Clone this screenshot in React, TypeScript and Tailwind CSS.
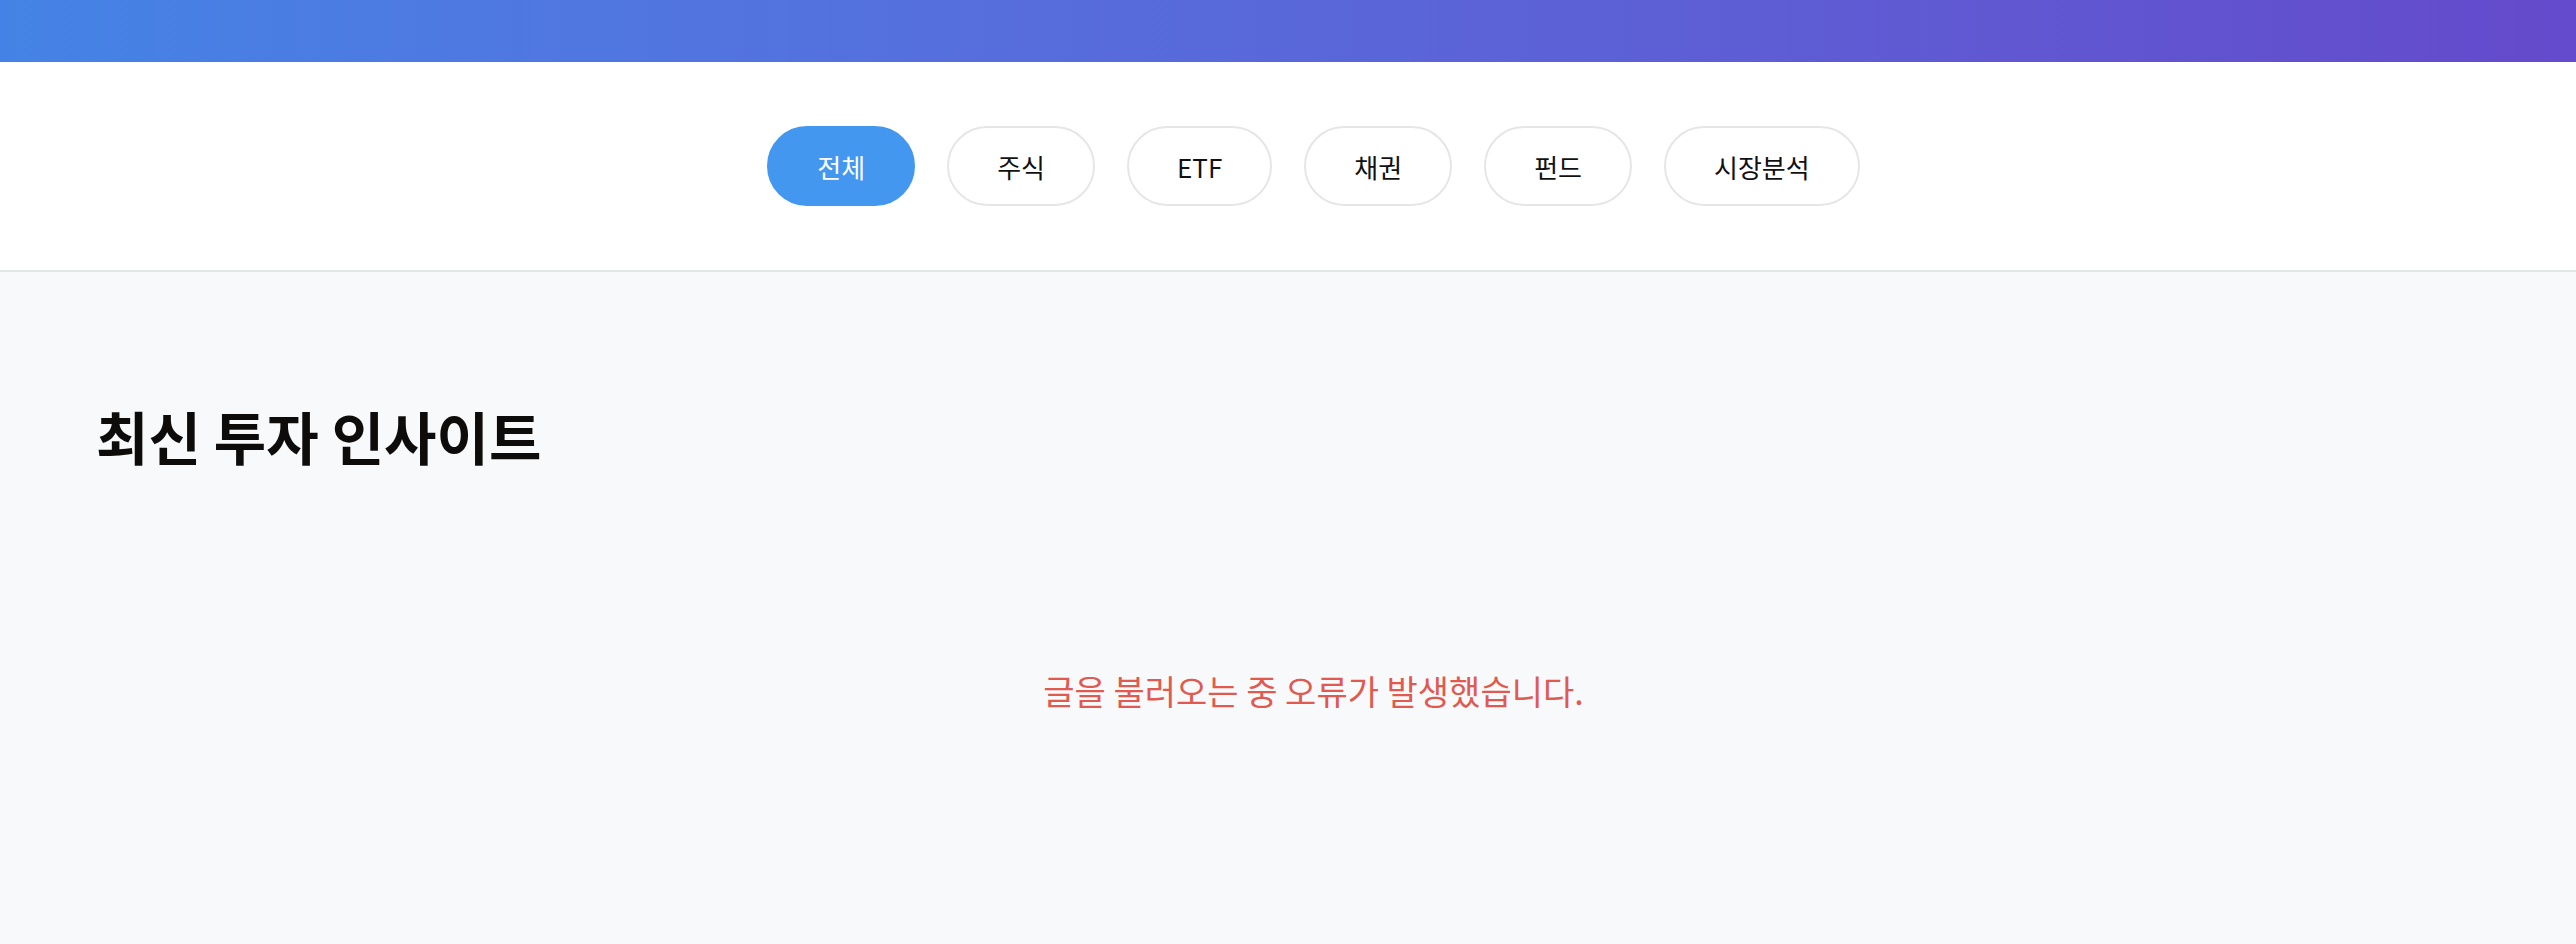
import { useState } from "react";

const CATEGORIES = ["전체", "주식", "ETF", "채권", "펀드", "시장분석"];

export default function App() {
  const [active, setActive] = useState("전체");

  return (
    <div className="min-h-screen bg-[#f8f9fb] font-['Noto_Sans_CJK_KR','Noto_Sans',sans-serif]">
      {/* Gradient header bar */}
      <div className="h-[62px] bg-gradient-to-r from-[#4483e5] to-[#644acc]" />

      {/* Category filter */}
      <nav className="bg-white border-b-2 border-[#e4e5e9] py-16 pl-[51px]">
        <div className="flex justify-center gap-8">
          {CATEGORIES.map((c) => (
            <button
              key={c}
              onClick={() => setActive(c)}
              className={
                c === active
                  ? "h-20 px-[48px] rounded-full border-2 border-[#4397ef] bg-[#4397ef] text-white text-[26px]"
                  : "h-20 px-[48px] rounded-full border-2 border-[#e6e6e6] bg-white text-[#111] text-[26px]"
              }
            >
              {c}
            </button>
          ))}
        </div>
      </nav>

      {/* Posts */}
      <main className="pl-[96px] pr-[45px] pt-[128px]">
        <h2 className="text-[57px] font-bold text-[#0e0c0a] leading-tight">
          최신 투자 인사이트
        </h2>
        <p className="mt-[194px] text-center text-[34px] text-[#e05a4f]">
          글을 불러오는 중 오류가 발생했습니다.
        </p>
      </main>
    </div>
  );
}
